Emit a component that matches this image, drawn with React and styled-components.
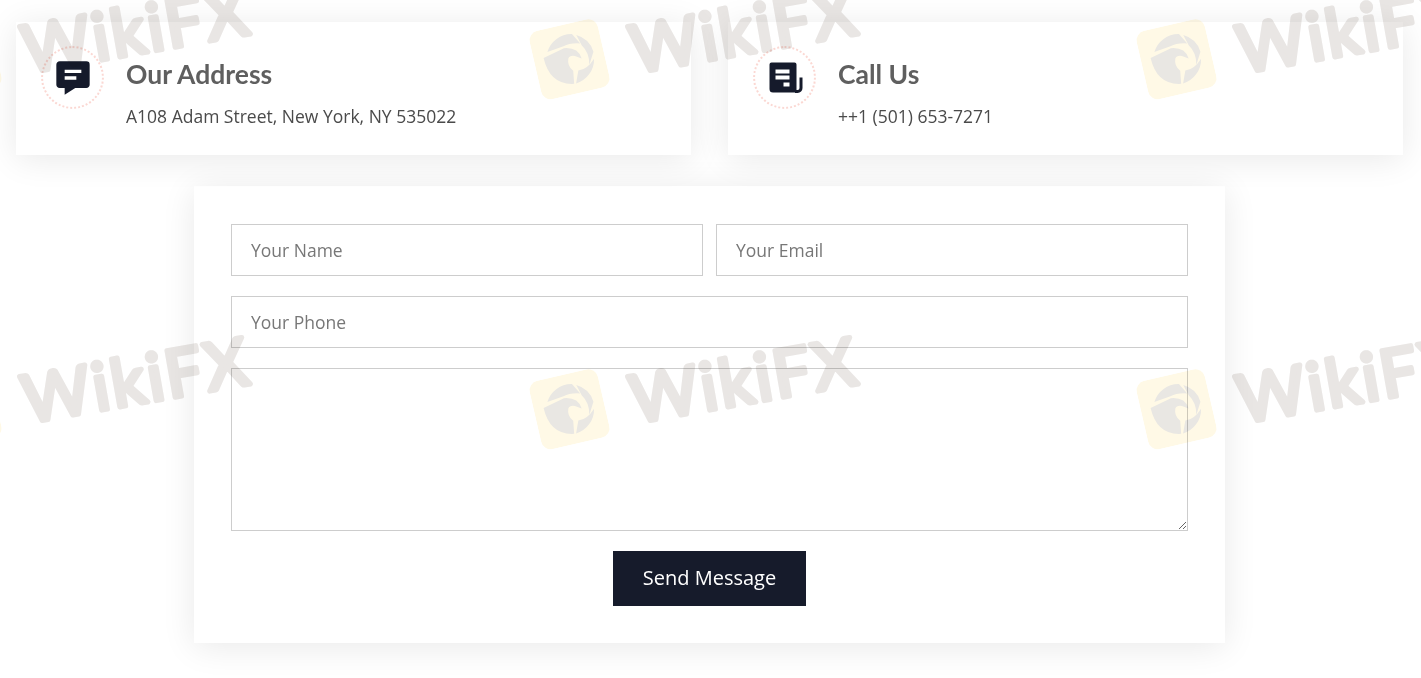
import React from 'react';
import styled, { createGlobalStyle } from 'styled-components';
import { BiSolidMessageDetail } from 'react-icons/bi';

const GlobalStyle = createGlobalStyle`
  html, body {
    margin: 0;
    background: #fff;
    overflow: hidden;
  }
  * {
    box-sizing: border-box;
  }
`;

const Page = styled.div`
  position: relative;
  width: 1421px;
  height: 678px;
  padding: 22px 18px 0 16px;
  overflow: hidden;
  font-family: "Open Sans", sans-serif;
  color: #4a4a4a;
`;

const InfoRow = styled.div`
  display: grid;
  grid-template-columns: 675px 675px;
  column-gap: 37px;
`;

const InfoCard = styled.div`
  display: flex;
  height: 133px;
  padding: 24px 25px;
  gap: 22px;
  background: #fff;
  box-shadow: 0 4px 32px rgba(0, 0, 0, 0.09);
`;

const IconRing = styled.div`
  display: flex;
  flex: none;
  align-items: center;
  justify-content: center;
  width: 63px;
  height: 63px;
  border: 2px dotted #fbd8d3;
  border-radius: 50%;
  color: #151a2b;
  font-size: 40px;
`;

const InfoBody = styled.div`
  padding-top: 11px;
`;

const InfoTitle = styled.h3`
  margin: 0 0 13px;
  font-family: Lato, sans-serif;
  font-size: 26.5px;
  line-height: 34px;
  font-weight: 700;
  color: #5f5f5f;
`;

const InfoText = styled.p`
  margin: 0;
  font-size: 17.5px;
  line-height: 24px;
  color: #4a4a4a;
`;

const FormCard = styled.form`
  display: flex;
  flex-direction: column;
  gap: 20px;
  width: 1031px;
  margin: 31px 0 0 178px;
  padding: 38px 37px 37px;
  background: #fff;
  box-shadow: 0 4px 32px rgba(0, 0, 0, 0.09);
`;

const FieldRow = styled.div`
  display: grid;
  grid-template-columns: 472px 472px;
  column-gap: 13px;
`;

const TextField = styled.input`
  display: block;
  width: 100%;
  height: 52px;
  padding: 0 19px;
  border: 1px solid #cdcdcd;
  border-radius: 0;
  outline: none;
  font-family: "Open Sans", sans-serif;
  font-size: 17.5px;
  color: #495057;
  &::placeholder {
    color: #777;
    opacity: 1;
  }
`;

const MessageField = styled.textarea`
  display: block;
  width: 100%;
  height: 163px;
  padding: 12px 19px;
  border: 1px solid #cdcdcd;
  border-radius: 0;
  outline: none;
  font-family: "Open Sans", sans-serif;
  font-size: 17.5px;
`;

const SendButton = styled.button`
  align-self: center;
  width: 193px;
  height: 55px;
  padding: 0 0 2px;
  border: none;
  border-radius: 0;
  background: #161b2b;
  color: #fff;
  font-family: "Open Sans", sans-serif;
  font-size: 20px;
`;

// watermark repeats over everything on the page
const Watermarks = styled.div`
  position: absolute;
  top: -18px;
  left: -76px;
  display: grid;
  grid-template-columns: repeat(3, 607.5px);
  grid-auto-rows: 350px;
  pointer-events: none;
  mix-blend-mode: multiply;
`;

const Mark = styled.div`
  display: flex;
  align-items: center;
  gap: 27px;
  height: 130px;
  transform: rotate(-13deg);
  transform-origin: 90px 60px;
`;

const MarkLogo = styled.svg`
  flex: none;
  width: 70px;
  height: 70px;
`;

const MarkWord = styled.svg`
  flex: none;
  width: 250px;
  height: 90px;
  overflow: visible;
  transform: rotate(3deg) translateY(10px);
  text {
    font-family: Lato, sans-serif;
    font-size: 66px;
    font-weight: 400;
    letter-spacing: 3px;
    fill: #e9e6e4;
    stroke: #e9e6e4;
    stroke-width: 5px;
    stroke-linejoin: round;
    stroke-linecap: round;
  }
`;

const EagleLogo = () => (
  <MarkLogo viewBox="0 0 70 70">
    <rect width="70" height="70" rx="10" fill="#fff9e6" />
    <g fill="#e9e7e3">
      <path d="M15 23 A25 25 0 0 1 43 11 L49 22 Q39 19 32 21 Z" />
      <path d="M47 13 A25 25 0 0 1 60 33 L53 45 Q56 33 50 24 Z" />
      <path d="M59 40 A25 25 0 0 1 36 60 L41 48 Q50 49 59 40 Z" />
      <path d="M10 28 L32 23 Q46 25 47 37 L41 33 Q36 31 34 34 Q31 41 36 47 L34 60 Q10 56 10 28 Z" />
    </g>
  </MarkLogo>
);

const ReceiptIcon = () => (
  <svg width="40" height="40" viewBox="0 0 40 40" fill="none">
    <path
      fill="currentColor"
      fillRule="evenodd"
      d="M6.5 4.5 H29.5 Q31.5 4.5 31.5 6.5 V34.5 H8 Q4.5 34.5 4.5 31 V6.5 Q4.5 4.5 6.5 4.5 Z
         M10.5 11.5 V15.5 H24.5 V11.5 Z M10.5 17.5 V21.5 H24.5 V17.5 Z M18.5 24.5 V28.5 H24.5 V24.5 Z"
    />
    <path stroke="currentColor" strokeWidth="3" d="M36 19.5 V30 A3.4 3.4 0 0 1 32.6 33.4 H30" />
  </svg>
);

const infoCards = [
  { title: 'Our Address', text: 'A108 Adam Street, New York, NY 535022', icon: <BiSolidMessageDetail /> },
  { title: 'Call Us', text: '++1 (501) 653-7271', icon: <ReceiptIcon /> },
];

const App = () => {
  return (
    <Page>
      <GlobalStyle />
      <InfoRow>
        {infoCards.map(({ title, text, icon }) => (
          <InfoCard key={title}>
            <IconRing>{icon}</IconRing>
            <InfoBody>
              <InfoTitle>{title}</InfoTitle>
              <InfoText>{text}</InfoText>
            </InfoBody>
          </InfoCard>
        ))}
      </InfoRow>
      <FormCard onSubmit={(e) => e.preventDefault()}>
        <FieldRow>
          <TextField placeholder="Your Name" />
          <TextField placeholder="Your Email" />
        </FieldRow>
        <TextField placeholder="Your Phone" />
        <MessageField />
        <SendButton type="submit">Send Message</SendButton>
      </FormCard>
      <Watermarks>
        {Array.from({ length: 6 }, (_, i) => (
          <Mark key={i}>
            <EagleLogo />
            <MarkWord viewBox="0 0 250 90">
              <text x="0" y="70">WikiFX</text>
            </MarkWord>
          </Mark>
        ))}
      </Watermarks>
    </Page>
  );
};

export default App;
